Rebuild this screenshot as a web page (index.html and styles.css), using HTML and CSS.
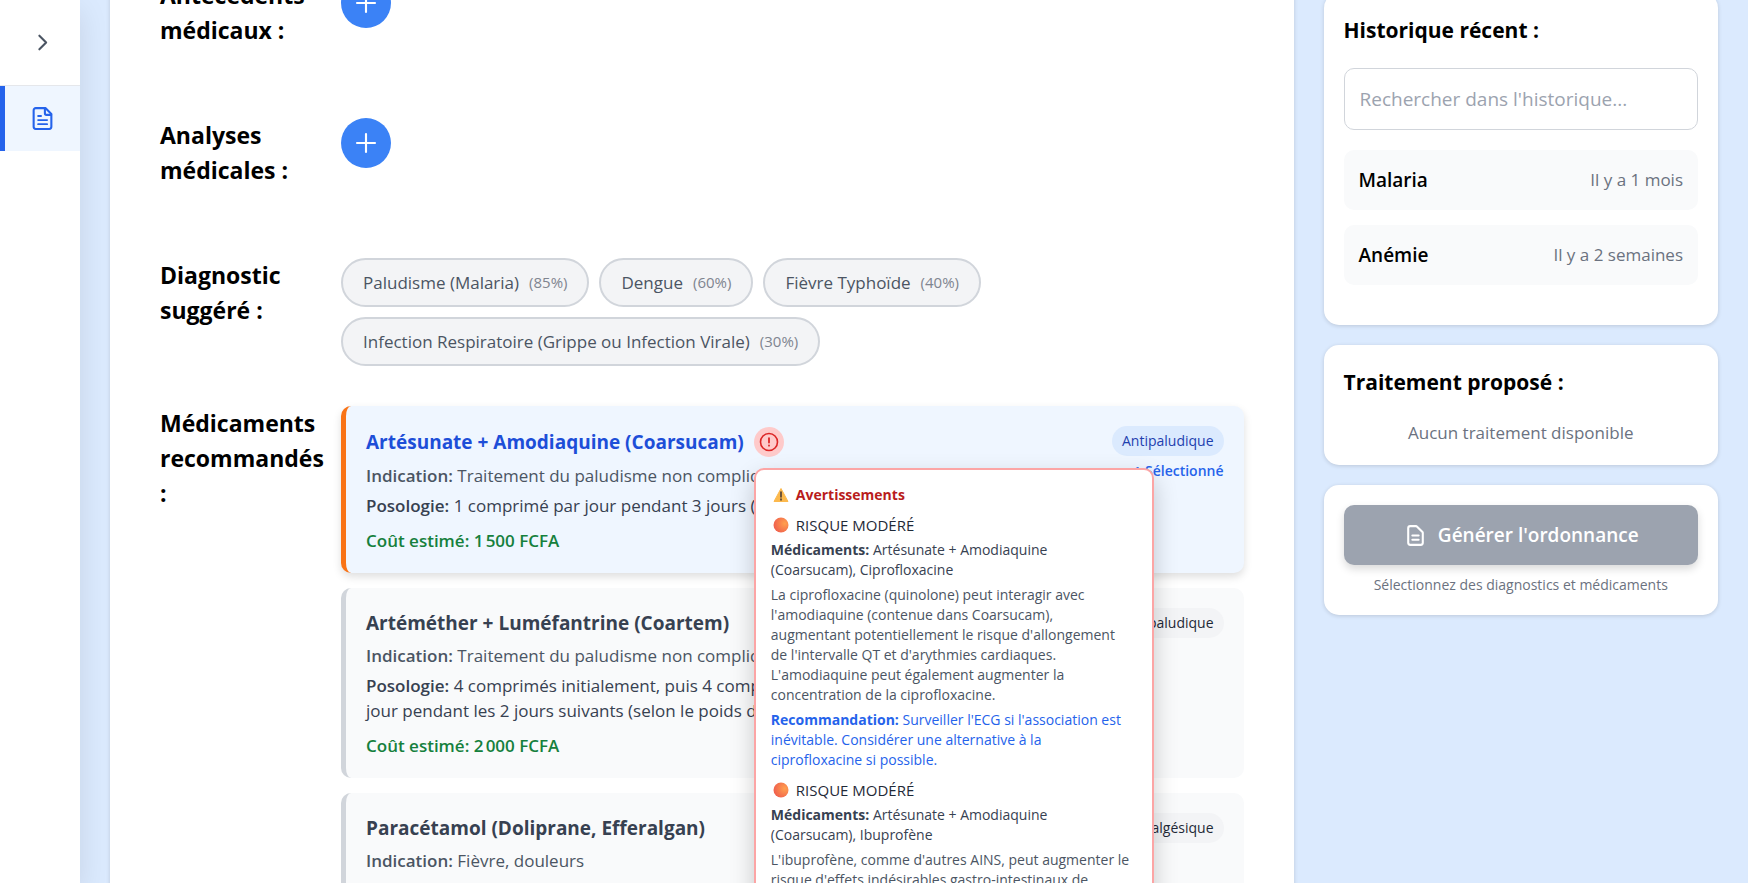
FILE: index.html
```html
<!DOCTYPE html>
<html lang="fr">
<head>
<meta charset="utf-8">
<title>Consultation</title>
<link rel="stylesheet" href="styles.css">
</head>
<body>
<div class="app">
  <nav class="sidebar" aria-label="Navigation">
    <div class="sidebar-head">
      <button class="toggle" type="button" aria-label="Ouvrir le menu">
        <svg width="25" height="25" viewBox="0 0 24 24" fill="none" stroke="currentColor" stroke-width="2" stroke-linecap="round" stroke-linejoin="round"><path d="M9 18.500l6.500-6.500L9 5.500"/></svg>
      </button>
    </div>
    <a class="nav-item" href="#" aria-label="Consultation">
      <svg width="25" height="25" viewBox="0 0 24 24" fill="none" stroke="currentColor" stroke-width="2" stroke-linecap="round" stroke-linejoin="round"><path d="M14.800 2H5.500a2 2 0 0 0-2 2v16a2 2 0 0 0 2 2h13a2 2 0 0 0 2-2V7.700z"/><path d="M14.300 2.500v4.500a1.500 1.500 0 0 0 1.500 1.500h4.500"/><path stroke-width="1.800" d="M7.800 9.600h2.800M7.800 13.500h8.600M7.800 17.400h8.600"/></svg>
    </a>
  </nav>

  <div class="content">
    <main class="sheet">
      <section class="row">
        <h2 class="row-label">Antécédents médicaux :</h2>
        <div class="row-body">
          <button class="add" type="button" aria-label="Ajouter un antécédent"><svg width="30" height="30" viewBox="0 0 24 24" fill="none" stroke="currentColor" stroke-width="1.700" stroke-linecap="round"><path d="M12 4.800v14.400M4.800 12h14.400"/></svg></button>
        </div>
      </section>
      <section class="row">
        <h2 class="row-label">Analyses médicales :</h2>
        <div class="row-body">
          <button class="add" type="button" aria-label="Ajouter une analyse"><svg width="30" height="30" viewBox="0 0 24 24" fill="none" stroke="currentColor" stroke-width="1.700" stroke-linecap="round"><path d="M12 4.800v14.400M4.800 12h14.400"/></svg></button>
        </div>
      </section>
      <section class="row">
        <h2 class="row-label">Diagnostic suggéré :</h2>
        <div class="row-body pills">
          <button class="pill" type="button">Paludisme (Malaria)<span class="pct">(85%)</span></button>
          <button class="pill" type="button">Dengue<span class="pct">(60%)</span></button>
          <button class="pill" type="button">Fièvre Typhoïde<span class="pct">(40%)</span></button>
          <button class="pill" type="button">Infection Respiratoire (Grippe ou Infection Virale)<span class="pct">(30%)</span></button>
        </div>
      </section>
      <section class="row">
        <h2 class="row-label">Médicaments recommandés :</h2>
        <div class="row-body meds">
          <article class="med med-selected">
            <div class="med-main">
              <div class="med-head">
                <h3 class="med-name">Artésunate + Amodiaquine (Coarsucam)</h3>
                <div class="warn">
                  <button class="warn-btn" type="button" aria-label="Avertissements" aria-describedby="tip"><svg width="20" height="20" viewBox="0 0 20 20" fill="none" stroke="currentColor" stroke-linecap="round"><circle cx="10" cy="10" r="8.500" stroke-width="1.600"/><path d="M10 6.200v4.300M10 13.500v.2" stroke-width="1.800"/></svg></button>
                  <div class="tip" id="tip" role="tooltip">
                    <p class="tip-title"><svg class="emoji" width="20" height="20" viewBox="0 0 20 20"><path d="M10 3.500L17 16.500H3z" fill="#fcb94d" stroke="#fcb94d" stroke-linejoin="round"/><path d="M10 7v5M10 14v1" stroke="#4b3b32" stroke-width="1.600" stroke-linecap="round"/></svg>Avertissements</p>
                    <div class="risk">
                      <p class="risk-level"><svg class="emoji" width="20" height="20" viewBox="0 0 20 20"><defs><radialGradient id="dot" cx=".75" cy=".4" r=".75"><stop offset="0" stop-color="#ffa04f"/><stop offset="1" stop-color="#f0604d"/></radialGradient></defs><circle cx="10" cy="10" r="7.500" fill="url(#dot)"/></svg>RISQUE MODÉRÉ</p>
                      <p class="risk-meds"><strong>Médicaments:</strong> Artésunate + Amodiaquine (Coarsucam), Ciprofloxacine</p>
                      <p class="risk-text">La ciprofloxacine (quinolone) peut interagir avec l'amodiaquine (contenue dans Coarsucam), augmentant potentiellement le risque d'allongement de l'intervalle QT et d'arythmies cardiaques. L'amodiaquine peut également augmenter la concentration de la ciprofloxacine.</p>
                      <p class="risk-advice"><strong>Recommandation:</strong> Surveiller l'ECG si l'association est inévitable. Considérer une alternative à la ciprofloxacine si possible.</p>
                    </div>
                    <div class="risk">
                      <p class="risk-level"><svg class="emoji" width="20" height="20" viewBox="0 0 20 20"><circle cx="10" cy="10" r="7.500" fill="url(#dot)"/></svg>RISQUE MODÉRÉ</p>
                      <p class="risk-meds"><strong>Médicaments:</strong> Artésunate + Amodiaquine (Coarsucam), Ibuprofène</p>
                      <p class="risk-text">L'ibuprofène, comme d'autres AINS, peut augmenter le risque d'effets indésirables gastro-intestinaux de l'amodiaquine.</p>
                    </div>
                  </div>
                </div>
              </div>
              <p class="med-use"><strong>Indication:</strong> Traitement du paludisme non compliqué</p>
              <p class="med-dose"><strong>Posologie:</strong> 1 comprimé par jour pendant 3 jours (selon le poids)</p>
              <p class="med-cost">Coût estimé: 1&#8239;500 FCFA</p>
            </div>
            <div class="med-side">
              <span class="tag">Antipaludique</span>
              <span class="picked">✓ Sélectionné</span>
            </div>
          </article>
          <article class="med">
            <div class="med-main">
              <div class="med-head"><h3 class="med-name">Artéméther + Luméfantrine (Coartem)</h3></div>
              <p class="med-use"><strong>Indication:</strong> Traitement du paludisme non compliqué</p>
              <p class="med-dose"><strong>Posologie:</strong> 4 comprimés initialement, puis 4 comprimés deux fois par<br>jour pendant les 2 jours suivants (selon le poids du patient)</p>
              <p class="med-cost">Coût estimé: 2&#8239;000 FCFA</p>
            </div>
            <div class="med-side"><span class="tag">Antipaludique</span></div>
          </article>
          <article class="med">
            <div class="med-main">
              <div class="med-head"><h3 class="med-name">Paracétamol (Doliprane, Efferalgan)</h3></div>
              <p class="med-use"><strong>Indication:</strong> Fièvre, douleurs</p>
              <p class="med-dose"><strong>Posologie:</strong> 1 comprimé toutes les 6 heures</p>
              <p class="med-cost">Coût estimé: 500 FCFA</p>
            </div>
            <div class="med-side"><span class="tag">Analgésique</span></div>
          </article>
        </div>
      </section>
    </main>

    <aside class="rail">
      <section class="panel history">
        <h2 class="panel-title">Historique récent :</h2>
        <input class="search" type="search" placeholder="Rechercher dans l'historique..." aria-label="Rechercher dans l'historique">
        <ul class="visits">
          <li class="visit"><span class="visit-name">Malaria</span><span class="visit-date">Il y a 1 mois</span></li>
          <li class="visit"><span class="visit-name">Anémie</span><span class="visit-date">Il y a 2 semaines</span></li>
        </ul>
      </section>
      <section class="panel">
        <h2 class="panel-title">Traitement proposé :</h2>
        <p class="empty">Aucun traitement disponible</p>
      </section>
      <section class="panel">
        <button class="generate" type="button"><svg width="25" height="25" viewBox="0 0 24 24" fill="none" stroke="currentColor" stroke-width="2" stroke-linecap="round" stroke-linejoin="round"><path d="M9 12h6m-6 4h6m2 5H7a2 2 0 0 1-2-2V5a2 2 0 0 1 2-2h5.586a1 1 0 0 1 .707.293l5.414 5.414a1 1 0 0 1 .293.707V19a2 2 0 0 1-2 2z"/></svg>Générer l'ordonnance</button>
        <p class="hint">Sélectionnez des diagnostics et médicaments</p>
      </section>
    </aside>
  </div>
</div>
</body>
</html>
```

FILE: styles.css
```css
:root {
  --fs-xs: 14px;
  --fs-pct: 15px;
  --fs-sm: 17px;
  --fs-md: 19px;
  --fs-lg: 21px;
  --fs-xl: 23px;
}

* { box-sizing: border-box; }

body, h2, h3, p, ul { margin: 0; padding: 0; }

body {
  background: #dbeafe;
  color: #000;
  font-family: "Open Sans", "Noto Sans", sans-serif;
  font-size: var(--fs-sm);
  line-height: 25px;
}

button, input { font: inherit; color: inherit; }
button { border: 0; cursor: pointer; }
svg { display: block; flex: none; }

.app {
  display: flex;
  height: 100vh;
  overflow: hidden;
}

.sidebar {
  flex: none;
  width: 80px;
  background: #fff;
  box-shadow: 0 10px 30px rgba(0, 0, 0, .1);
}
.sidebar-head {
  height: 86px;
  display: flex;
  align-items: center;
  justify-content: center;
  padding-left: 5px;
  border-bottom: 1px solid #e5e7eb;
}
.toggle {
  display: flex;
  padding: 10px;
  background: none;
  color: #4b5563;
}
.nav-item {
  display: flex;
  justify-content: center;
  padding: 20px 0;
  border-left: 5px solid #2563eb;
  background: #eff6ff;
  color: #2563eb;
}

.content {
  flex: 1;
  min-width: 0;
  display: grid;
  grid-template-columns: 3fr 1fr;
  align-items: start;
  gap: 30px;
  padding: 0 30px;
}

/* Scrolled part of the consultation sheet */
.sheet {
  display: flex;
  flex-direction: column;
  gap: 40px;
  margin-top: -72px;
  padding: 50px;
  background: #fff;
  border-radius: 15px;
  box-shadow: 0 1px 4px rgba(0, 0, 0, .15);
}
.row {
  display: flex;
  align-items: flex-start;
  min-height: 100px;
}
.row-label {
  flex: none;
  width: 181px;
  padding-right: 10px;
  font-size: var(--fs-xl);
  font-weight: 700;
  line-height: 35px;
}
.row-body { flex: 1; min-width: 0; }

.add {
  display: flex;
  padding: 10px;
  border-radius: 50%;
  background: #3b82f6;
  color: #fff;
}

.pills {
  display: flex;
  flex-wrap: wrap;
  gap: 10px;
}
.pill {
  display: flex;
  align-items: center;
  gap: 10px;
  padding: 10px 20px;
  border: 2px solid #d1d5db;
  border-radius: 25px;
  background: #f3f4f6;
  color: #4b5563;
  font-weight: 500;
}
.pct {
  color: #7f8590;
  font-size: var(--fs-pct);
  font-weight: 400;
}

.meds {
  display: flex;
  flex-direction: column;
  gap: 15px;
}
.med {
  display: flex;
  justify-content: space-between;
  gap: 20px;
  padding: 20px;
  border-left: 5px solid #d1d5db;
  border-radius: 10px;
  background: #f9fafb;
  color: #374151;
}
.med-selected {
  border-color: #f97316;
  background: #eff6ff;
  box-shadow: 0 4px 8px rgba(0, 0, 0, .13);
}
.med-head {
  display: flex;
  align-items: center;
  gap: 10px;
  margin-bottom: 5px;
}
.med-name {
  font-size: var(--fs-md);
  font-weight: 700;
  line-height: 30px;
}
.med-selected .med-head { min-height: 32px; }
.med-selected .med-name { color: #1d4ed8; }
.med strong { font-weight: 600; }
.med-use { color: #4b5563; }
.med-dose { margin-top: 5px; }
.med-cost {
  margin-top: 10px;
  color: #15803d;
  font-weight: 600;
}
.med-side {
  display: flex;
  flex-direction: column;
  align-items: flex-end;
  gap: 5px;
}
.tag {
  padding: 5px 10px;
  border-radius: 15px;
  background: #f3f4f6;
  color: #1f2937;
  font-size: var(--fs-xs);
  line-height: 20px;
}
.med-selected .tag { background: #dbeafe; color: #1e40af; }
.picked {
  color: #2563eb;
  font-size: var(--fs-xs);
  font-weight: 600;
  line-height: 20px;
}

.warn { position: relative; }
.warn-btn {
  display: flex;
  padding: 5px;
  border-radius: 50%;
  background: #fecaca;
  color: #dc2626;
}
.tip {
  position: absolute;
  z-index: 2;
  top: 100%;
  left: 0;
  width: 400px;
  margin-top: 11px;
  padding: 15px 20px 15px 15px;
  border: 2px solid #fca5a5;
  border-radius: 10px;
  background: #fff;
  box-shadow: 0 10px 25px rgba(0, 0, 0, .2);
  color: #4b5563;
  font-size: var(--fs-xs);
  line-height: 20px;
}
.tip .tip-title, .tip strong { font-weight: 700; }
.tip-title, .risk-level {
  display: flex;
  align-items: center;
  gap: 5px;
}
.tip-title { color: #b91c1c; }
.risk { margin-top: 10px; }
.risk-level { color: #1f2937; font-size: var(--fs-pct); font-weight: 500; }
.risk-meds { margin-top: 5px; color: #374151; }
.risk-text { margin-top: 5px; }
.risk-advice { margin-top: 5px; color: #2563eb; }

.rail {
  display: flex;
  flex-direction: column;
  gap: 20px;
  margin-top: -7px;
}
.panel {
  display: flex;
  flex-direction: column;
  padding: 20px;
  background: #fff;
  border-radius: 15px;
  box-shadow: 0 1px 4px rgba(0, 0, 0, .15);
}
.history { padding-bottom: 40px; }
.panel-title {
  margin-bottom: 20px;
  font-size: var(--fs-lg);
  font-weight: 700;
  line-height: 35px;
}
.search {
  width: 100%;
  padding: 15px;
  border: 1px solid #d1d5db;
  border-radius: 10px;
  background: #fff;
  font-size: var(--fs-md);
  line-height: 30px;
  appearance: none;
}
.search::placeholder { color: #9ca3af; opacity: 1; }
.visits {
  display: flex;
  flex-direction: column;
  gap: 15px;
  margin-top: 20px;
  list-style: none;
}
.visit {
  display: flex;
  align-items: center;
  justify-content: space-between;
  padding: 15px;
  border-radius: 10px;
  background: #f9fafb;
  line-height: 30px;
}
.visit-name { font-size: var(--fs-md); font-weight: 600; }
.visit-date { color: #6b7280; }
.empty { color: #6b7280; text-align: center; }
.generate {
  display: flex;
  align-items: center;
  justify-content: center;
  gap: 10px;
  padding: 15px;
  border-radius: 10px;
  background: #9ca3af;
  box-shadow: 0 4px 8px rgba(0, 0, 0, .15);
  color: #fff;
  font-size: var(--fs-md);
  font-weight: 600;
  line-height: 30px;
}
.hint {
  margin-top: 10px;
  color: #6b7280;
  font-size: var(--fs-xs);
  line-height: 20px;
  text-align: center;
}
```
